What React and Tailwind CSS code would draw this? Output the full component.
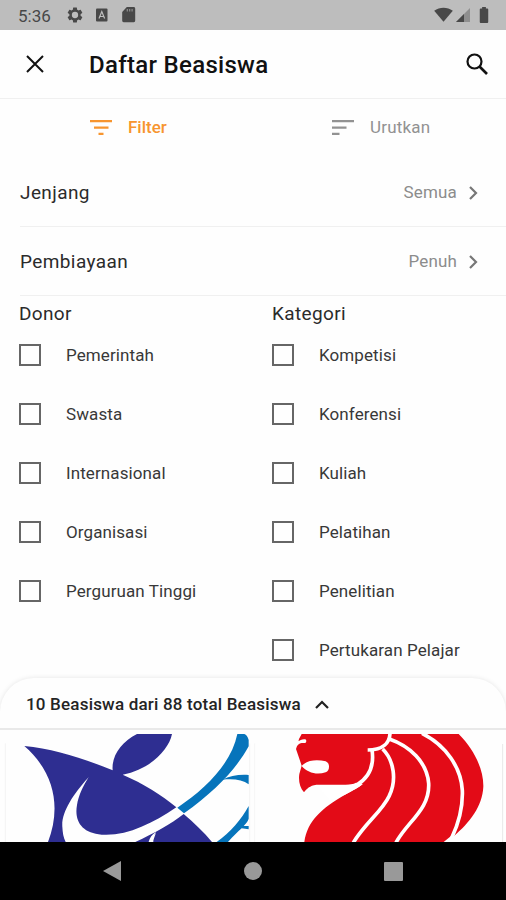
import React from "react";

const donors = ["Pemerintah", "Swasta", "Internasional", "Organisasi", "Perguruan Tinggi"];
const categories = ["Kompetisi", "Konferensi", "Kuliah", "Pelatihan", "Penelitian", "Pertukaran Pelajar"];

function Icon({ d, className }) {
  return (
    <svg viewBox="0 0 24 24" fill="currentColor" className={className}>
      <path fillRule="evenodd" d={d} />
    </svg>
  );
}

function StatusBar() {
  return (
    <div className="flex h-[30px] shrink-0 items-center bg-[#bdbdbd] pl-[18px] pr-[17px] text-[#484848]">
      <span className="w-[48px] pt-[2px] text-[17px] leading-none">5:36</span>
      <Icon className="h-[18px] w-[18px]" d="M19.43 12.98c.04-.32.07-.64.07-.98s-.03-.66-.07-.98l2.11-1.65c.19-.15.24-.42.12-.64l-2-3.46c-.12-.22-.39-.3-.61-.22l-2.49 1c-.52-.4-1.08-.73-1.69-.98l-.38-2.65C14.46 2.18 14.25 2 14 2h-4c-.25 0-.46.18-.49.42l-.38 2.65c-.61.25-1.17.59-1.69.98l-2.49-1c-.23-.09-.49 0-.61.22l-2 3.46c-.13.22-.07.49.12.64l2.11 1.65c-.04.32-.07.65-.07.98s.03.66.07.98l-2.11 1.65c-.19.15-.24.42-.12.64l2 3.46c.12.22.39.3.61.22l2.49-1c.52.4 1.08.73 1.69.98l.38 2.65c.03.24.24.42.49.42h4c.25 0 .46-.18.49-.42l.38-2.65c.61-.25 1.17-.59 1.69-.98l2.49 1c.23.09.49 0 .61-.22l2-3.46c.12-.22.07-.49-.12-.64l-2.11-1.65zM12 16.200a4.200 4.200 0 1 1 0-8.400 4.200 4.200 0 0 1 0 8.400z" />
      <svg viewBox="0 0 12 14" className="ml-[12px] h-[14px] w-[12px]">
        <rect width="11.500" height="13" y=".5" rx="1" fill="currentColor" />
        <path d="M3 10.500 5.800 3.500l2.800 7M4 8.500h4" fill="none" stroke="#bdbdbd" strokeWidth="1.200" />
      </svg>
      <svg viewBox="0 0 14 16" className="ml-[14px] h-[16px] w-[14px]">
        <path fill="currentColor" d="M4.800 0H12a1.400 1.400 0 0 1 1.200 1.400v12.400a1.400 1.400 0 0 1-1.400 1.400H1.600A1.400 1.400 0 0 1 .2 13.800V5z" />
        <path d="M5.300 2v2.600M7.700 2v2.600M10.100 2v2.600" stroke="#8e8e8e" strokeWidth="1.200" />
      </svg>
      <svg viewBox="0 0 20 16" className="ml-auto h-[16px] w-[19px]">
        <path fill="currentColor" d="M.2 3.500C6-.6 14-.6 19.800 3.500L10 15z" />
      </svg>
      <svg viewBox="0 0 14 14" className="ml-[3px] h-[14px] w-[14px]">
        <path fill="#8f8f8f" d="M14 0v14H0z" />
        <path fill="currentColor" d="M8 6v8H0z" />
      </svg>
      <svg viewBox="0 0 10 17" className="ml-[9px] h-[16px] w-[10px]">
        <path fill="currentColor" d="M3 0h4v1.600h1.500q1 0 1 1V16q0 1-1 1h-7q-1 0-1-1V2.600q0-1 1-1H3z" />
      </svg>
    </div>
  );
}

function SettingRow({ label, value }) {
  return (
    <div className="ml-5 flex h-[69px] items-center border-b border-[#f0f0f0] pr-[28px] pt-[2px]">
      <span className="text-[19px] tracking-[0.4px] text-[#2b2b2b]">{label}</span>
      <span className="ml-auto text-[17px] tracking-[0.15px] text-[#8c8c8c]">{value}</span>
      <svg viewBox="0 0 9 14" className="ml-[12px] h-[14px] w-[9px]">
        <path d="M1 1l6 6-6 6" fill="none" stroke="#777" strokeWidth="2.200" />
      </svg>
    </div>
  );
}

function CheckColumn({ title, items }) {
  return (
    <div className="w-[253px] pl-[19px]">
      <h2 className="h-[29px] pt-[4px] text-[19px] leading-[27px] tracking-[0.35px] text-[#2b2b2b]">{title}</h2>
      {items.map((item) => (
        <label key={item} className="flex h-[59px] items-center">
          <span className="h-[22px] w-[22px] border-2 border-[#666]" />
          <span className="ml-[25px] pt-[2px] text-[17px] tracking-[0.1px] text-[#383838]">{item}</span>
        </label>
      ))}
    </div>
  );
}

function BirdLogo() {
  return (
    <svg viewBox="0 192 759 324" className="h-[108px] w-[253px]">
      <path d="M16 220V516M749 220V516" stroke="#f3f3f3" strokeWidth="3" />
      <g fill="#2e2e91">
        <path d="M73 228C160 236 250 265 338 301C334 260 362 216 411 192H516C506 242 446 300 368 314C430 340 485 375 529 412C455 462 380 499 305 494C247 490 222 455 231 405C235 379 248 350 266 322C218 374 184 428 187 470C188 488 190 502 197 516H144C181 420 170 313 73 228Z" />
        <path d="M551 432C581 458 611 486 636 516H458L468 488L446 516H406C463 489 512 463 551 432Z" />
      </g>
      <path d="M446 516C449 503 456 494 468 486C462 497 458 506 460 516Z" fill="#fff" />
      <g fill="#0674bb">
        <path d="M712 192H733Q742 195 746 210V229C708 298 646 363 552 430L532 413C616 357 694 281 712 192Z" />
        <path d="M667 329C689 317 718 313 746 315V343C728 329 700 325 667 329Z" />
        <path d="M746 408C724 449 691 487 650 516H684C700 499 713 485 725 475L746 478V468L731 468C739 459 744 453 746 446Z" />
      </g>
    </svg>
  );
}

function LionLogo() {
  return (
    <svg viewBox="0 192 759 324" className="h-[108px] w-[253px]">
      <path d="M5 220V516" stroke="#f6f6f6" strokeWidth="3" />
      <path d="M749 222V516" stroke="#e8e8e8" strokeWidth="3" />
      <path fill="#e30b17" d="M146 192H617C665 240 692 300 691 350C688 410 650 457 603 498L595 497L572 516H154C163 452 207 414 276 374C302 359 318 352 326 344H190C170 347 161 356 153 367C140 353 136 330 139 312L146 287L138 263L129 237L135 219L138 207Z" />
      <g fill="#fff">
        <path d="M146 288C163 269 193 268 218 274Q229 279 228 290Q228 303 218 307C191 316 163 308 146 288Z" />
        <path d="M130 230C139 217 149 219 157 219Q163 213 157 208C147 206 142 212 134 214Z" />
        <path d="M190 347C235 344 285 350 309 338L330 342C318 353 300 361 276 374L230 390Z" />
      </g>
      <g fill="none" stroke="#fff" strokeWidth="11">
        <path d="M411 190C410 218 391 240 344 240" />
        <path d="M357 239C364 286 350 322 311 345" />
        <path d="M389 237C424 272 431 332 409 377C388 423 334 462 301 518" />
        <path d="M409 207C470 228 522 276 527 340C531 419 462 455 429 518" />
        <path d="M507 190C579 226 624 292 628 361C630 413 615 464 596 504" />
      </g>
    </svg>
  );
}

export default function App() {
  return (
    <div className="flex h-[900px] w-[506px] flex-col overflow-hidden bg-[#fefefe] font-[Roboto,sans-serif]">
      <StatusBar />
      <header className="flex h-[69px] shrink-0 items-center border-b border-[#f0f0f0] pl-[26px] pr-[14px] text-[#111]">
        <svg viewBox="0 0 18 18" className="h-[18px] w-[18px]">
          <path d="M1 1l16 16M17 1L1 17" stroke="currentColor" strokeWidth="2" />
        </svg>
        <h1 className="ml-[45px] pt-[2px] text-[24px] font-medium tracking-[0.3px]">Daftar Beasiswa</h1>
        <svg viewBox="0 0 22 22" className="ml-auto mr-[4px] h-[22px] w-[22px]" fill="none" stroke="currentColor">
          <circle cx="8.500" cy="8.500" r="7" strokeWidth="2.200" />
          <path d="M13.500 13.500l7.500 7.500" strokeWidth="2.600" />
        </svg>
      </header>
      <div className="flex h-[59px] shrink-0 pb-[2px] text-[17px]">
        <div className="flex w-[253px] items-center pl-[90px] text-[#f7952f]">
          <svg viewBox="0 0 22 15" className="h-[15px] w-[22px]" fill="currentColor">
            <path d="M0 0h22v2.200H0zM4 6.500h14.500v2.200H4zM8.500 12.800h5V15h-5z" />
          </svg>
          <span className="ml-[16px] font-medium">Filter</span>
        </div>
        <div className="flex w-[253px] items-center pl-[79px] text-[#929292]">
          <svg viewBox="0 0 22 15" className="h-[15px] w-[22px]" fill="currentColor">
            <path d="M0 0h22v2.200H0zM0 6.500h14.500v2.200H0zM0 12.800h7.500V15H0z" />
          </svg>
          <span className="ml-[16px] tracking-[0.2px]">Urutkan</span>
        </div>
      </div>
      <SettingRow label="Jenjang" value="Semua" />
      <SettingRow label="Pembiayaan" value="Penuh" />
      <div className="flex h-[382px] shrink-0">
        <CheckColumn title="Donor" items={donors} />
        <CheckColumn title="Kategori" items={categories} />
      </div>
      <section className="relative flex h-[164px] shrink-0 flex-col rounded-t-[34px] bg-[#fefefe] shadow-[0_0_5px_rgba(0,0,0,0.10)]">
        <div className="flex h-[52px] shrink-0 items-center border-b-2 border-[#e9e9e9] pl-[26px] pt-[3px]">
          <span className="text-[17px] font-medium tracking-[0.19px] text-[#242424]">10 Beasiswa dari 88 total Beasiswa</span>
          <svg viewBox="0 0 14 9" className="ml-[14px] h-[9px] w-[14px]">
            <path d="M1 8l6-6 6 6" fill="none" stroke="#222" strokeWidth="2.200" />
          </svg>
        </div>
        <div className="flex pt-[4px]">
          <BirdLogo />
          <LionLogo />
        </div>
      </section>
      <nav className="relative flex h-[58px] shrink-0 items-center bg-black pl-[103px]">
        <svg viewBox="0 0 18 20" className="h-[20px] w-[18px]">
          <path d="M0 10L18 0v20z" fill="#999" />
        </svg>
        <span className="ml-[123px] h-[18px] w-[18px] rounded-full bg-[#999]" />
        <span className="ml-[122px] h-[19px] w-[19px] rounded-[1px] bg-[#999]" />
      </nav>
    </div>
  );
}
